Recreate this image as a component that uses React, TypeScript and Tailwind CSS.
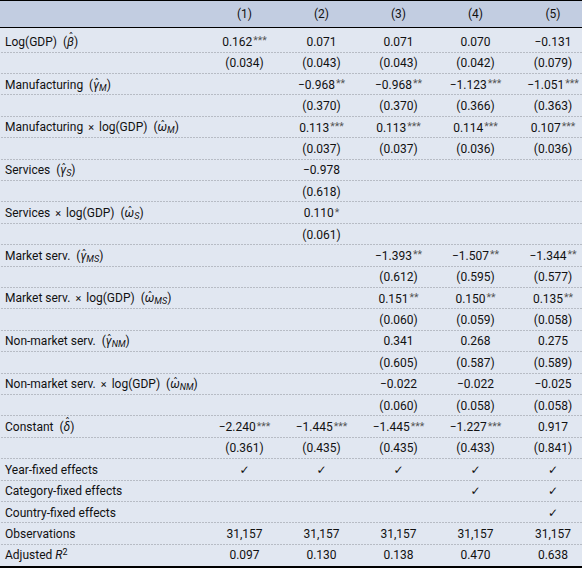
import React from "react";

const FONT = { fontFamily: "Roboto, 'Noto Sans', sans-serif" };

function Hat({ c, top = 3, dx = 1 }: { c: string; top?: number; dx?: number }) {
  return (
    <span className="relative inline-block italic leading-[18px]">
      {c}
      <span
        className="absolute left-0 right-0 text-center not-italic text-[10px] leading-[10px]"
        style={{ top, marginLeft: dx, fontFamily: "'DejaVu Sans', sans-serif" }}
      >
        ˆ
      </span>
    </span>
  );
}

function Sub({ s }: { s: string }) {
  return <span className="italic text-[9px] relative top-[2px]">{s}</span>;
}

function Math({ c, s, top, dx }: { c: string; s?: string; top?: number; dx?: number }) {
  return (
    <span className="ml-[3px]">
      (<Hat c={c} top={top} dx={dx} />
      {s ? <Sub s={s} /> : null})
    </span>
  );
}

const Times = () => <span className="text-[11px] mx-[5px]">×</span>;

function Val({ v }: { v: string }) {
  if (v === "✓")
    return (
      <span className="text-[12px]" style={{ fontFamily: "'DejaVu Sans', sans-serif" }}>
        ✓
      </span>
    );
  const m = v.match(/^(.*?)(\**)$/);
  const num = m ? m[1] : v;
  const stars = m ? m[2] : "";
  return (
    <span className="whitespace-nowrap">
      {num}
      {stars ? (
        <span className="text-[10.5px] relative top-[-1.5px] ml-[1px] text-[#555]">{stars}</span>
      ) : null}
    </span>
  );
}

type Row = { label: React.ReactNode; vals: string[] };

const rows: Row[] = [
  { label: <>Log(GDP) <Math c="β" top={0} /></>, vals: ["0.162***", "0.071", "0.071", "0.070", "−0.131"] },
  { label: "", vals: ["(0.034)", "(0.043)", "(0.043)", "(0.042)", "(0.079)"] },
  { label: <>Manufacturing <Math c="γ" s="M" /></>, vals: ["", "−0.968**", "−0.968**", "−1.123***", "−1.051***"] },
  { label: "", vals: ["", "(0.370)", "(0.370)", "(0.366)", "(0.363)"] },
  { label: <>Manufacturing<Times />log(GDP) <Math c="ω" s="M" /></>, vals: ["", "0.113***", "0.113***", "0.114***", "0.107***"] },
  { label: "", vals: ["", "(0.037)", "(0.037)", "(0.036)", "(0.036)"] },
  { label: <>Services <Math c="γ" s="S" /></>, vals: ["", "−0.978", "", "", ""] },
  { label: "", vals: ["", "(0.618)", "", "", ""] },
  { label: <>Services<Times />log(GDP) <Math c="ω" s="S" /></>, vals: ["", "0.110*", "", "", ""] },
  { label: "", vals: ["", "(0.061)", "", "", ""] },
  { label: <>Market serv. <Math c="γ" s="MS" /></>, vals: ["", "", "−1.393**", "−1.507**", "−1.344**"] },
  { label: "", vals: ["", "", "(0.612)", "(0.595)", "(0.577)"] },
  { label: <>Market serv.<Times />log(GDP) <Math c="ω" s="MS" /></>, vals: ["", "", "0.151**", "0.150**", "0.135**"] },
  { label: "", vals: ["", "", "(0.060)", "(0.059)", "(0.058)"] },
  { label: <>Non-market serv. <Math c="γ" s="NM" /></>, vals: ["", "", "0.341", "0.268", "0.275"] },
  { label: "", vals: ["", "", "(0.605)", "(0.587)", "(0.589)"] },
  { label: <>Non-market serv.<Times />log(GDP) <Math c="ω" s="NM" /></>, vals: ["", "", "−0.022", "−0.022", "−0.025"] },
  { label: "", vals: ["", "", "(0.060)", "(0.058)", "(0.058)"] },
  { label: <>Constant <Math c="δ" top={0} /></>, vals: ["−2.240***", "−1.445***", "−1.445***", "−1.227***", "0.917"] },
  { label: "", vals: ["(0.361)", "(0.435)", "(0.435)", "(0.433)", "(0.841)"] },
  { label: "Year-fixed effects", vals: ["✓", "✓", "✓", "✓", "✓"] },
  { label: "Category-fixed effects", vals: ["", "", "", "✓", "✓"] },
  { label: "Country-fixed effects", vals: ["", "", "", "", "✓"] },
  { label: "Observations", vals: ["31,157", "31,157", "31,157", "31,157", "31,157"] },
  {
    label: (
      <>
        Adjusted <span className="italic">R</span>
        <span className="text-[9px] relative top-[-4px]">2</span>
      </>
    ),
    vals: ["0.097", "0.130", "0.138", "0.470", "0.638"],
  },
];

const GRID = "grid grid-cols-[206px_77px_77px_77px_77px_1fr] items-center";
const DOTS =
  "bg-[linear-gradient(to_right,#8d9199_1px,transparent_1px)] bg-[length:3px_1px] bg-repeat-x bg-bottom";

export default function App() {
  return (
    <div className="w-[582px] h-[573px] bg-white text-[12px] text-[#111]" style={FONT}>
      <div className="border-t border-black bg-[#e1e7f1]">
        <div className={`${GRID} h-[26px] bg-[#c2cde1]`}>
          <div />
          {["(1)", "(2)", "(3)", "(4)", "(5)"].map((h, i) => (
            <div key={h} className={`text-center ${i === 4 ? "pl-[10px]" : ""}`}>
              {h}
            </div>
          ))}
        </div>
        <div className="h-px bg-black" />
        {rows.map((r, idx) => {
          const first = idx === 0;
          const last = idx === rows.length - 1;
          return (
            <div
              key={idx}
              className={`${GRID} ${first ? "h-[24.7px] pt-[3.3px]" : "h-[21.4px]"} ${last ? "" : DOTS}`}
            >
              <div className="pl-[5px] whitespace-nowrap">{r.label}</div>
              {r.vals.map((v, i) => (
                <div key={i} className={`text-center ${i === 4 ? "pl-[10px]" : ""}`}>
                  <Val v={v} />
                </div>
              ))}
            </div>
          );
        })}
        <div className="h-[2px] bg-black" />
      </div>
    </div>
  );
}
